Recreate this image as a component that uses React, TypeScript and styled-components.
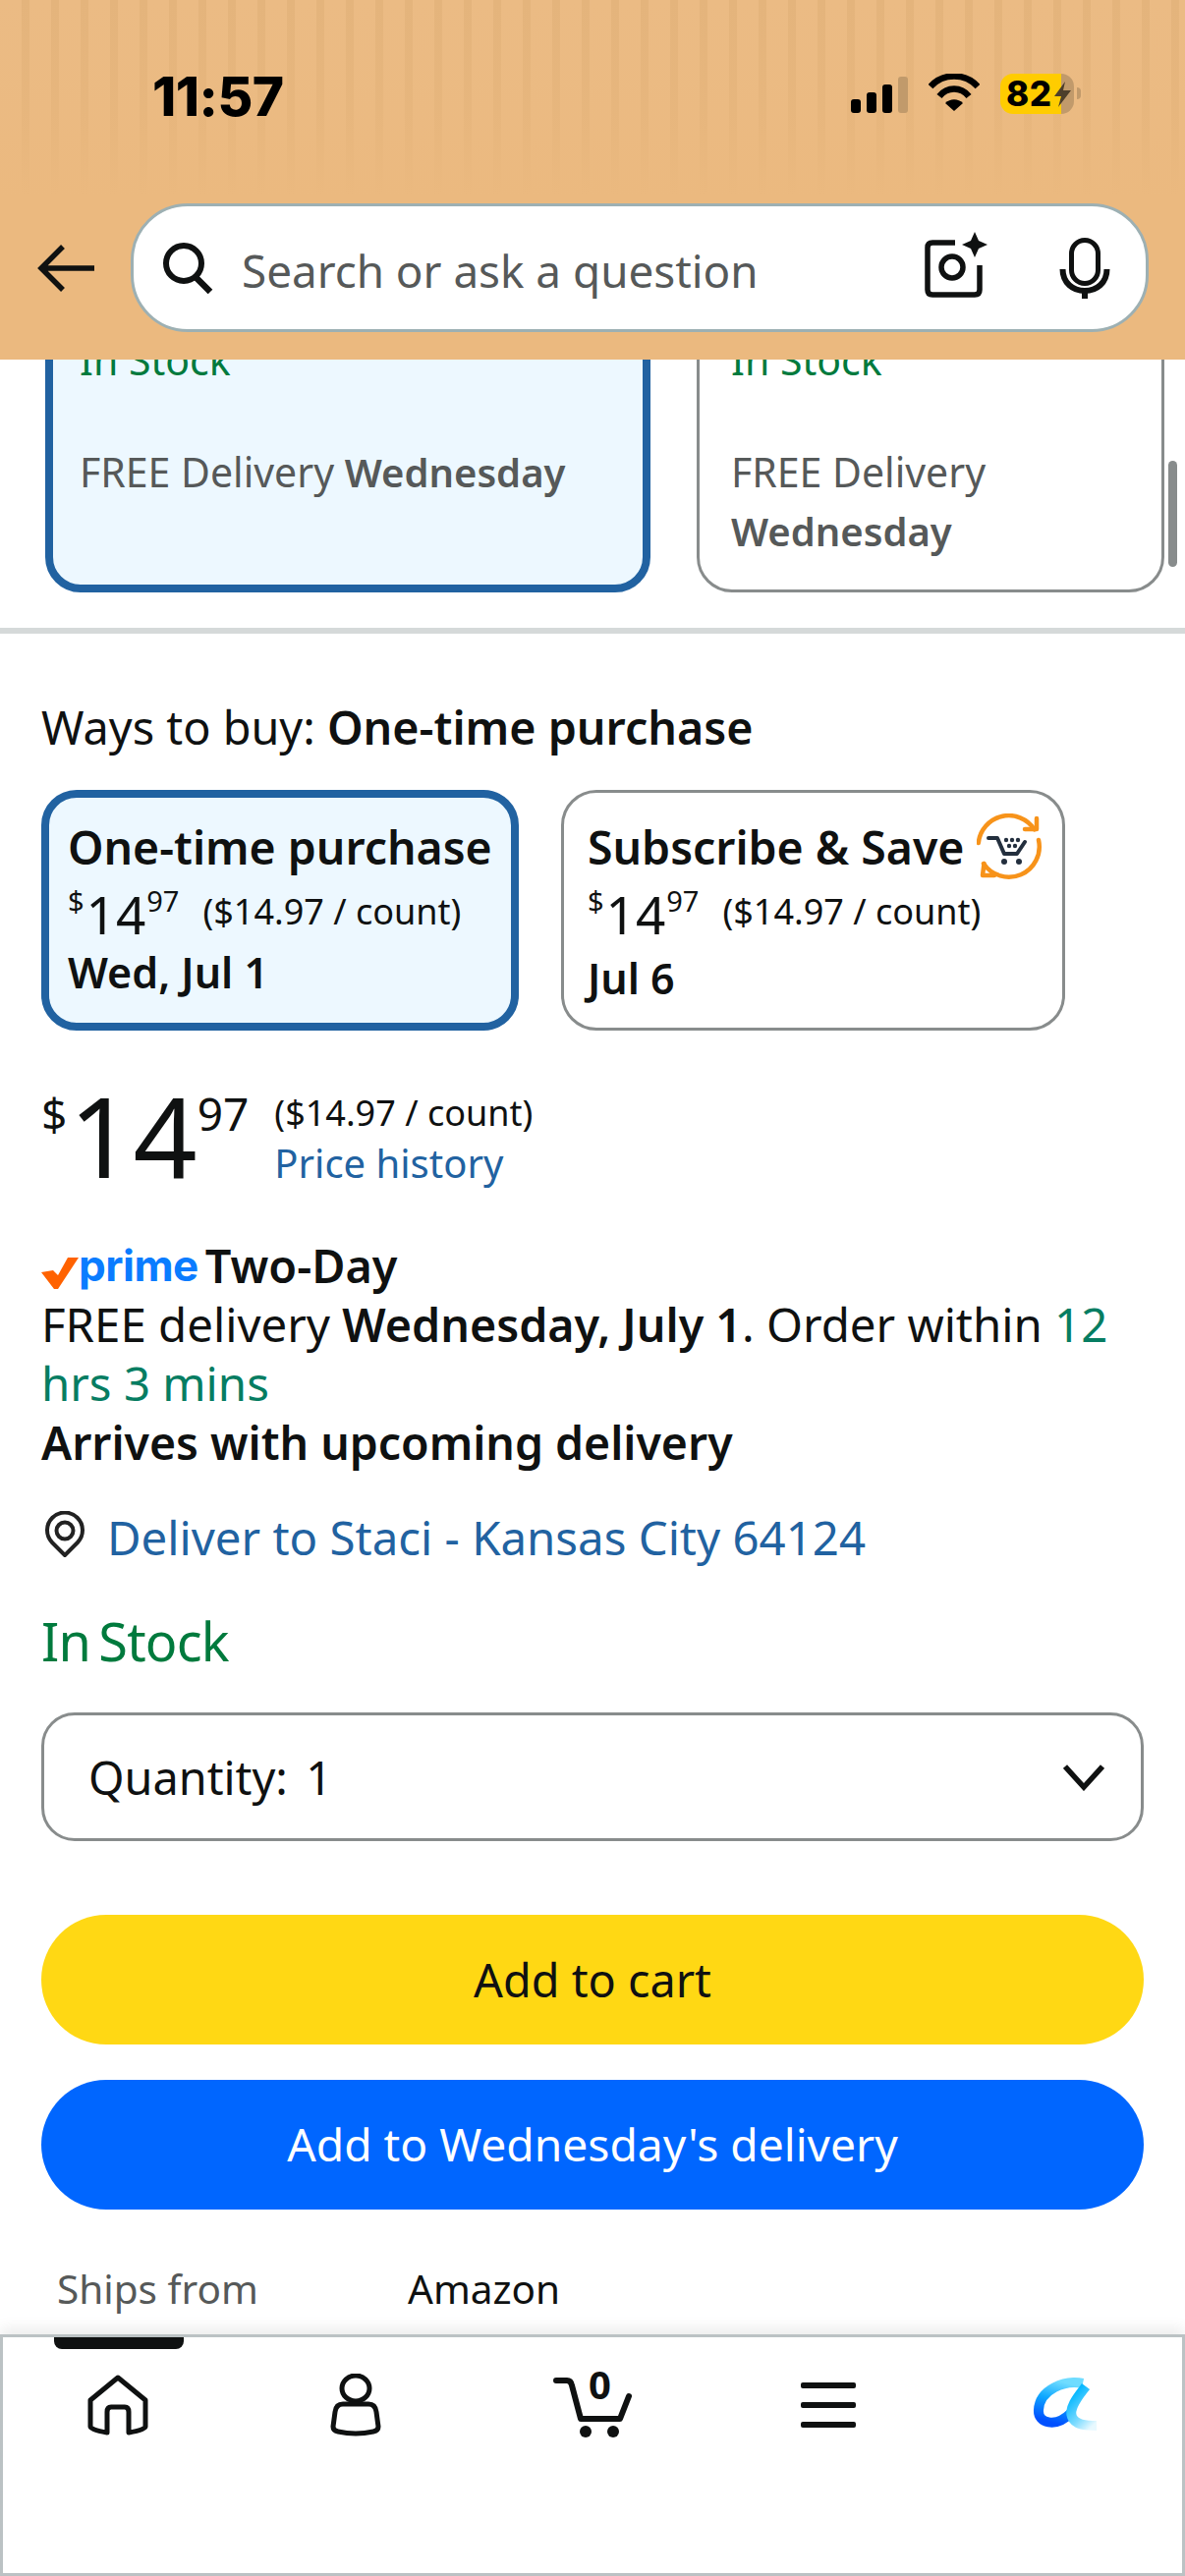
import React from "react";
import styled, { createGlobalStyle } from "styled-components";

const GlobalStyle = createGlobalStyle`
  html, body {
    margin: 0;
    padding: 0;
    background: #fff;
  }
  * {
    box-sizing: border-box;
  }
`;

const Page = styled.div`
  width: 1206px;
  height: 2622px;
  display: flex;
  flex-direction: column;
  overflow: hidden;
  background: #fff;
  color: #0f1111;
  font-family: "Noto Sans", "Open Sans", sans-serif;
  font-size: 46.8px;
  line-height: 60px;
`;

const Header = styled.header`
  flex: 0 0 366px;
  position: relative;
  z-index: 2;
  background:
    linear-gradient(to bottom, rgba(235, 185, 127, 0) 0, rgba(235, 185, 127, 0.4) 110px, #ebb97f 200px),
    repeating-linear-gradient(90deg, #ebbb84 0, #ebbb84 22px, #e4b47c 22px, #e4b47c 30px);
`;

const StatusBar = styled.div`
  height: 207px;
  display: flex;
  align-items: flex-start;
  justify-content: space-between;
  padding: 68px 106px 0 155px;
`;

const Clock = styled.div`
  font-family: Inter, "Noto Sans", sans-serif;
  font-weight: 800;
  font-size: 55px;
  line-height: 60px;
  letter-spacing: -0.5px;
  color: #000;
`;

const StatusIcons = styled.div`
  display: flex;
  align-items: flex-start;
  padding-top: 7px;
`;

const Signal = styled.div`
  display: flex;
  align-items: flex-end;
  gap: 6px;
  height: 38px;
  margin-top: 2px;
  margin-right: 21px;
`;

const SignalBar = styled.span<{ $h: number; $off?: boolean }>`
  width: 10px;
  height: ${({ $h }) => $h}px;
  border-radius: 3px;
  background: ${({ $off }) => ($off ? "#c19a6b" : "#000")};
`;

const Battery = styled.div`
  position: relative;
  width: 75px;
  height: 41px;
  margin-left: 21px;
  border-radius: 13px;
  overflow: hidden;
  background: linear-gradient(90deg, #ffcc00 0, #ffcc00 62px, #c19a6b 62px);
  font-family: Inter, "Noto Sans", sans-serif;
  font-weight: 800;
  font-size: 35px;
  line-height: 41px;
  color: #000;
  padding-left: 6px;
  letter-spacing: 0.5px;
`;

const BatteryTip = styled.span`
  width: 4px;
  height: 12px;
  margin: 14px 0 0 3px;
  border-radius: 0 4px 4px 0;
  background: #c19a6b;
`;

const Bolt = styled.svg`
  position: absolute;
  right: 3px;
  top: 8px;
`;

const SearchRow = styled.div`
  display: flex;
  align-items: center;
  padding-left: 38px;
`;

const BackIcon = styled.svg`
  flex: none;
  margin-right: 37px;
`;

const SearchBar = styled.div`
  width: 1036px;
  height: 131px;
  display: flex;
  align-items: center;
  padding: 0 36px 0 29px;
  background: #fff;
  border: 3px solid #9db0b3;
  border-radius: 58px;
`;

const Placeholder = styled.span`
  flex: 1;
  margin: 5px 0 0 29px;
  color: #565959;
  font-size: 45.8px;
`;

const CameraIcon = styled.svg`
  flex: none;
  margin: -8px 71px 0 0;
`;

const Scroller = styled.main`
  flex: 1;
  min-height: 0;
  position: relative;
  overflow: hidden;
`;

const ScrollThumb = styled.div`
  position: absolute;
  top: 103px;
  right: 8px;
  width: 9px;
  height: 108px;
  border-radius: 5px;
  background: #888c8c;
`;

const Strong = styled.strong`
  font-weight: 600;
  font-size: 46.6px;
`;

const VariantRow = styled.div`
  display: flex;
  gap: 47px;
  padding-left: 46px;
  margin-top: -103px;
`;

const VariantCard = styled.div<{ $selected?: boolean }>`
  height: 340px;
  width: ${({ $selected }) => ($selected ? 616 : 476)}px;
  padding: ${({ $selected }) => ($selected ? "65px 20px 0 27px" : "70px 20px 0 32px")};
  border-radius: 36px;
  border: ${({ $selected }) => ($selected ? "8px solid #2162a1" : "3px solid #888c8c")};
  background: ${({ $selected }) => ($selected ? "#edf8ff" : "#fff")};
  color: #565959;
  font-size: 41px;

  ${Strong} {
    font-size: 40px;
  }
`;

const StockSmall = styled.div`
  color: #007a3d;
  margin-bottom: 54px;
`;

const Divider = styled.div`
  height: 6px;
  margin-top: 36px;
  background: #d5d9d9;
`;

const Content = styled.section`
  padding: 65px 42px 0;
`;

const TileRow = styled.div`
  display: flex;
  gap: 43px;
  margin-top: 34px;
`;

const Tile = styled.div<{ $selected?: boolean }>`
  height: 245px;
  width: ${({ $selected }) => ($selected ? 486 : 513)}px;
  padding: ${({ $selected }) => ($selected ? "20px 0 0 19px" : "25px 0 0 24px")};
  border-radius: 36px;
  border: ${({ $selected }) => ($selected ? "8px solid #2162a1" : "3px solid #888c8c")};
  background: ${({ $selected }) => ($selected ? "#edf8ff" : "#fff")};
`;

const TileTitle = styled.div`
  display: flex;
  align-items: center;
  gap: 12px;
  font-size: 46.4px;
  font-weight: 600;
  white-space: nowrap;
`;

const SaveIcon = styled.svg`
  flex: none;
  margin: -8px 0;
`;

const TilePrice = styled.div`
  display: flex;
  align-items: flex-start;
  height: 50px;
  margin-top: 10px;
  white-space: nowrap;
`;

const SmallSup = styled.span`
  font-size: 29px;
  line-height: 30px;
`;

const TileWhole = styled.span`
  font-size: 53px;
  line-height: 58px;
  margin: 0 1px 0 2px;
`;

const PerCount = styled.span`
  font-size: 36px;
  line-height: 52px;
  margin-left: 24px;
`;

const TileDate = styled.div<{ $low?: boolean }>`
  font-size: 43px;
  font-weight: 600;
  line-height: 50px;
  margin-top: ${({ $low }) => ($low ? 19 : 13)}px;
`;

const PriceBlock = styled.div`
  display: flex;
  margin-top: 48px;
  height: 113px;
`;

const BigCurrency = styled.span`
  font-size: 46px;
  line-height: 60px;
  margin-top: 6px;
`;

const BigWhole = styled.span`
  font-size: 114px;
  line-height: 150px;
  margin: -17px 0 0 2px;
`;

const BigCents = styled.span`
  font-size: 46px;
  line-height: 60px;
  margin: 6px 0 0 0;
`;

const PriceSide = styled.div`
  display: flex;
  flex-direction: column;
  margin-left: 26px;
`;

const PerCountLarge = styled.span`
  font-size: 36px;
  line-height: 50px;
  margin-top: 11px;
`;

const TextLink = styled.a`
  color: #2162a1;
  font-size: 47.4px;
  text-decoration: none;
`;

const PriceHistory = styled(TextLink)`
  font-size: 40px;
  line-height: 60px;
  margin-top: -4px;
`;

const PrimeRow = styled.div`
  display: flex;
  align-items: center;
  margin-top: 48px;
  font-weight: 600;
  white-space: nowrap;
`;

const PrimeCheck = styled.svg`
  flex: none;
  margin-top: 16px;
`;

const PrimeWord = styled.span`
  color: #0a7cff;
  font-family: Inter, "Noto Sans", sans-serif;
  font-weight: 700;
  font-size: 44px;
  letter-spacing: -0.5px;
  margin-right: 7px;
`;

const DeliveryLine = styled.div`
  font-size: 47.4px;
`;

const Countdown = styled.span`
  color: #067d62;
`;

const ArrivesLine = styled.div`
  font-size: 46.4px;
  font-weight: 600;
`;

const DeliverRow = styled.div`
  display: flex;
  align-items: center;
  gap: 22px;
  margin-top: 37px;
`;

const PinIcon = styled.svg`
  flex: none;
  margin: -6px 0 0 3px;
`;

const StockLarge = styled.div`
  color: #007a3d;
  font-size: 54px;
  line-height: 70px;
  margin-top: 40px;
  letter-spacing: -0.8px;
  word-spacing: -5px;
`;

const QuantityBox = styled.div`
  height: 131px;
  display: flex;
  align-items: center;
  justify-content: space-between;
  margin-top: 38px;
  padding: 0 37px 0 45px;
  border: 3px solid #888c8c;
  border-radius: 34px;
  word-spacing: -3px;
`;

const Button = styled.button<{ $blue?: boolean }>`
  display: block;
  width: 100%;
  height: 132px;
  margin-top: ${({ $blue }) => ($blue ? 36 : 75)}px;
  padding: 0;
  border: none;
  border-radius: 66px;
  font-family: inherit;
  font-size: ${({ $blue }) => ($blue ? 46.2 : 46.8)}px;
  line-height: 60px;
  background: ${({ $blue }) => ($blue ? "#0066ff" : "#ffd814")};
  color: ${({ $blue }) => ($blue ? "#fff" : "#0f1111")};
`;

const ShipsRow = styled.div`
  display: flex;
  margin-top: 51px;
  padding-left: 16px;
  font-size: 40.5px;
`;

const ShipsLabel = styled.span`
  width: 357px;
  color: #565959;
`;

const BottomNav = styled.nav`
  flex: 0 0 246px;
  position: relative;
  z-index: 2;
  display: grid;
  grid-template-columns: repeat(5, 1fr);
  grid-auto-rows: 137px;
  background: #fff;
  border: 3px solid #bbc2c4;
  box-shadow: 0 -6px 14px rgba(0, 0, 0, 0.08);
`;

const ActiveBar = styled.div`
  position: absolute;
  top: 0;
  left: 52px;
  width: 132px;
  height: 12px;
  border-radius: 0 0 8px 8px;
  background: #0f1111;
`;

const NavItem = styled.div`
  position: relative;
  display: flex;
  align-items: center;
  justify-content: center;
`;

const HomeIcon = styled.svg`
  margin-left: -6px;
`;

const PersonIcon = styled.svg`
  margin-left: -3px;
`;

const CartCount = styled.span`
  position: absolute;
  top: 28px;
  left: 50%;
  margin-left: -4px;
  font-size: 40px;
  font-weight: 700;
  line-height: 40px;
`;

const App: React.FC = () => {
  return (
    <Page>
      <GlobalStyle />
      <Header>
        <StatusBar>
          <Clock>11:57</Clock>
          <StatusIcons>
            <Signal>
              <SignalBar $h={14} />
              <SignalBar $h={21} />
              <SignalBar $h={29} />
              <SignalBar $h={37} $off />
            </Signal>
            <svg width="52" height="38" viewBox="0 0 52 38">
              <path d="M2 13 C15 -1 37 -1 50 13" fill="none" stroke="#000" strokeWidth="6.5" />
              <path d="M11 23 C19 13 33 13 41 23" fill="none" stroke="#000" strokeWidth="6.5" />
              <path d="M26 38 L17 30 C22 25 30 25 35 30 Z" fill="#000" />
            </svg>
            <Battery>
              82
              <Bolt width="17" height="26" viewBox="0 0 17 26">
                <path d="M11 0 L0 15 H7 L4 26 L17 9 H9 Z" fill="#4d3f2b" />
              </Bolt>
            </Battery>
            <BatteryTip />
          </StatusIcons>
        </StatusBar>
        <SearchRow>
          <BackIcon width="58" height="48" viewBox="0 0 58 48">
            <path d="M58 24 H5 M26 2 L4 24 L26 46" fill="none" stroke="#0f1111" strokeWidth="5.5" />
          </BackIcon>
          <SearchBar>
            <svg width="52" height="52" viewBox="0 0 52 52">
              <circle cx="22" cy="21" r="18" fill="none" stroke="#0f1111" strokeWidth="6" />
              <path d="M34 35 L49 50" stroke="#0f1111" strokeWidth="6.5" />
            </svg>
            <Placeholder>Search or ask a question</Placeholder>
            <CameraIcon width="68" height="68" viewBox="0 0 68 68">
              <path
                d="M33 12 H10 Q5 12 5 17 V60 Q5 65 10 65 H53 Q58 65 58 60 V35"
                fill="none"
                stroke="#0f1111"
                strokeWidth="5.5"
              />
              <circle cx="30" cy="37" r="11" fill="none" stroke="#0f1111" strokeWidth="5.5" />
              <path d="M53 1 L57 10 L66 14 L57 18 L53 27 L49 18 L40 14 L49 10 Z" fill="#0f1111" />
            </CameraIcon>
            <svg width="52" height="62" viewBox="0 0 52 62">
              <rect x="12.5" y="2.5" width="27" height="44" rx="13.5" fill="none" stroke="#0f1111" strokeWidth="5" />
              <path d="M3.5 32 C3.5 46 14 54 26 54 C38 54 48.5 46 48.5 32" fill="none" stroke="#0f1111" strokeWidth="6" />
              <path d="M26 54 V62" stroke="#0f1111" strokeWidth="6" />
            </svg>
          </SearchBar>
        </SearchRow>
      </Header>

      <Scroller>
        <ScrollThumb />
        <VariantRow>
          <VariantCard $selected>
            <StockSmall>In Stock</StockSmall>
            <div>
              FREE Delivery <Strong>Wednesday</Strong>
            </div>
          </VariantCard>
          <VariantCard>
            <StockSmall>In Stock</StockSmall>
            <div>
              FREE Delivery <Strong>Wednesday</Strong>
            </div>
          </VariantCard>
        </VariantRow>
        <Divider />

        <Content>
          <div>
            Ways to buy: <Strong>One-time purchase</Strong>
          </div>
          <TileRow>
            <Tile $selected>
              <TileTitle>One-time purchase</TileTitle>
              <TilePrice>
                <SmallSup>$</SmallSup>
                <TileWhole>14</TileWhole>
                <SmallSup>97</SmallSup>
                <PerCount>($14.97 / count)</PerCount>
              </TilePrice>
              <TileDate>Wed, Jul 1</TileDate>
            </Tile>
            <Tile>
              <TileTitle>
                Subscribe &amp; Save
                <SaveIcon width="68" height="68" viewBox="0 0 68 68">
                  <g fill="none" stroke="#f7931a" strokeWidth="4.5" strokeLinecap="round" strokeLinejoin="round">
                    <path d="M1.800 30 A31 31 0 0 1 58.700 16.300" />
                    <path d="M61 5 V16 H49" />
                    <path d="M63 27 A31 31 0 0 1 7 51" />
                    <path d="M7.500 51 L6 63 H18" />
                  </g>
                  <path
                    d="M12 25 H21 L28 41 H41 L49 29"
                    fill="none"
                    stroke="#232f3e"
                    strokeWidth="4"
                    strokeLinecap="round"
                    strokeLinejoin="round"
                  />
                  <g fill="#232f3e">
                    <circle cx="28" cy="49" r="3" />
                    <circle cx="43" cy="49" r="3" />
                    <circle cx="30" cy="27" r="2.2" />
                    <circle cx="36" cy="27" r="2.2" />
                    <circle cx="42" cy="27" r="2.2" />
                    <circle cx="33" cy="33" r="2.2" />
                    <circle cx="39" cy="33" r="2.2" />
                  </g>
                </SaveIcon>
              </TileTitle>
              <TilePrice>
                <SmallSup>$</SmallSup>
                <TileWhole>14</TileWhole>
                <SmallSup>97</SmallSup>
                <PerCount>($14.97 / count)</PerCount>
              </TilePrice>
              <TileDate $low>Jul 6</TileDate>
            </Tile>
          </TileRow>

          <PriceBlock>
            <BigCurrency>$</BigCurrency>
            <BigWhole>14</BigWhole>
            <BigCents>97</BigCents>
            <PriceSide>
              <PerCountLarge>($14.97 / count)</PerCountLarge>
              <PriceHistory>Price history</PriceHistory>
            </PriceSide>
          </PriceBlock>

          <PrimeRow>
            <PrimeCheck width="38" height="33" viewBox="0 0 38 33">
              <path d="M0 15 L12 13 L17 18 L27 0 H38 L17 32 H13 Z" fill="#ff6200" />
            </PrimeCheck>
            <PrimeWord>prime</PrimeWord>
            Two-Day
          </PrimeRow>
          <DeliveryLine>
            FREE delivery <Strong>Wednesday, July 1</Strong>. Order within <Countdown>12 hrs 3 mins</Countdown>
          </DeliveryLine>
          <ArrivesLine>Arrives with upcoming delivery</ArrivesLine>

          <DeliverRow>
            <PinIcon width="42" height="48" viewBox="0 0 42 48">
              <path d="M21 45 L8 32 A18 18 0 1 1 34 32 Z" fill="none" stroke="#222" strokeWidth="4" strokeLinejoin="round" />
              <circle cx="21" cy="20" r="8.5" fill="none" stroke="#222" strokeWidth="4" />
            </PinIcon>
            <TextLink>Deliver to Staci - Kansas City 64124</TextLink>
          </DeliverRow>

          <StockLarge>In Stock</StockLarge>

          <QuantityBox>
            <span>Quantity:&nbsp; 1</span>
            <svg width="42" height="28" viewBox="0 0 42 28">
              <path d="M2 3 L21 24 L40 3" fill="none" stroke="#0f1111" strokeWidth="5.5" />
            </svg>
          </QuantityBox>

          <Button>Add to cart</Button>
          <Button $blue>Add to Wednesday's delivery</Button>

          <ShipsRow>
            <ShipsLabel>Ships from</ShipsLabel>
            <span>Amazon</span>
          </ShipsRow>
        </Content>
      </Scroller>

      <BottomNav>
        <ActiveBar />
        <NavItem>
          <HomeIcon width="62" height="62" viewBox="0 0 62 62">
            <path
              d="M31 3 L59 26 V53 Q59 56 42 59 V38 Q42 33 38 33 H24 Q20 33 20 38 V59 Q3 56 3 53 V26 Z"
              fill="none"
              stroke="#0f1111"
              strokeWidth="5"
              strokeLinejoin="round"
            />
          </HomeIcon>
        </NavItem>
        <NavItem>
          <PersonIcon width="54" height="64" viewBox="0 0 54 64">
            <ellipse cx="27" cy="15" rx="14" ry="13" fill="none" stroke="#0f1111" strokeWidth="5" />
            <path
              d="M14 31 H40 Q47 31 48 39 L50 54 Q50 58 45 59 Q27 63 9 59 Q4 58 4 54 L6 39 Q7 31 14 31 Z"
              fill="none"
              stroke="#0f1111"
              strokeWidth="5"
            />
          </PersonIcon>
        </NavItem>
        <NavItem>
          <svg width="80" height="68" viewBox="0 0 80 68">
            <path
              d="M3 9 H14 Q18 9 19 14 L28 48 H68 L77 25"
              fill="none"
              stroke="#0f1111"
              strokeWidth="6"
              strokeLinecap="round"
              strokeLinejoin="round"
            />
            <circle cx="33" cy="61" r="6" fill="#0f1111" />
            <circle cx="61" cy="61" r="6" fill="#0f1111" />
          </svg>
          <CartCount>0</CartCount>
        </NavItem>
        <NavItem>
          <svg width="56" height="46" viewBox="0 0 56 46">
            <rect y="0" width="56" height="6" rx="2" fill="#0f1111" />
            <rect y="20" width="56" height="6" rx="2" fill="#0f1111" />
            <rect y="40" width="56" height="6" rx="2" fill="#0f1111" />
          </svg>
        </NavItem>
        <NavItem>
          <svg width="66" height="56" viewBox="0 0 66 56">
            <defs>
              <linearGradient id="loop" x1="0.6" y1="0" x2="0.3" y2="1">
                <stop offset="0" stopColor="#6fdcff" />
                <stop offset="0.45" stopColor="#0fa8ff" />
                <stop offset="1" stopColor="#0050ff" />
              </linearGradient>
              <linearGradient id="tail" x1="0.4" y1="0" x2="1" y2="0.9">
                <stop offset="0" stopColor="#08b8ff" />
                <stop offset="0.6" stopColor="#7fdcff" />
                <stop offset="1" stopColor="#e8f9ff" />
              </linearGradient>
            </defs>
            <path d="M52 6 C34 2 8 12 7 33 C6 46 24 52 40 36" fill="none" stroke="url(#loop)" strokeWidth="10" />
            <path d="M55 9 C50 16 37 30 41 40 C44 48 54 49 66 49" fill="none" stroke="url(#tail)" strokeWidth="10" />
          </svg>
        </NavItem>
      </BottomNav>
    </Page>
  );
};

export default App;
